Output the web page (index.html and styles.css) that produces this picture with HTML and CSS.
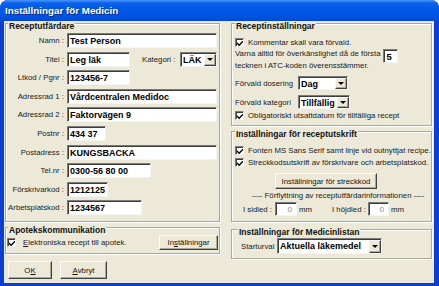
FILE: index.html
```html
<!DOCTYPE html>
<html>
<head>
<meta charset="utf-8">
<link rel="stylesheet" href="styles.css">
</head>
<body>
<div class="window">
  <div class="titlebar">Inställningar för Medicin</div>
  <div class="client">
    <div class="col">
      <div class="group g-utf">
        <div class="gtitle">Receptutfärdare</div>
        <div class="form">
          <span class="lbl">Namn :</span><div class="tb w150">Test Person</div>
          <span class="lbl">Titel :</span>
          <div class="rowf">
            <div class="tb w63">Leg läk</div>
            <span class="kat">Kategori :</span>
            <div class="sel w37"><span>LÄK</span><i class="arr"><b></b></i></div>
          </div>
          <span class="lbl">Ltkod / Pgnr :</span><div class="tb w63">123456-7</div>
          <span class="lbl">Adressrad 1 :</span><div class="tb w150">Vårdcentralen Medidoc</div>
          <span class="lbl">Adressrad 2 :</span><div class="tb w150">Faktorvägen 9</div>
          <span class="lbl">Postnr :</span><div class="tb w39">434 37</div>
          <span class="lbl">Postadress :</span><div class="tb w150">KUNGSBACKA</div>
          <span class="lbl">Tel.nr :</span><div class="tb w84">0300-56 80 00</div>
          <span class="lbl">Förskrivarkod :</span><div class="tb w41">1212125</div>
          <span class="lbl">Arbetsplatskod :</span><div class="tb w75">1234567</div>
        </div>
      </div>
      <div class="group g-apo">
        <div class="gtitle">Apotekskommunikation</div>
        <div class="apo-row">
          <span class="cb"><svg width="7" height="7" viewBox="0 0 7 7"><path d="M0 3 L2.5 5.5 L7 1" fill="none" stroke="#000" stroke-width="1.6"/></svg></span>
          <span class="cbtext"><u>E</u>lektroniska recept till apotek.</span>
          <span class="btn b-inst">In<u>s</u>tällningar</span>
        </div>
      </div>
      <div class="buttons">
        <span class="btn b-ok">O<u>K</u></span>
        <span class="btn b-av"><u>A</u>vbryt</span>
      </div>
    </div>

    <div class="col">
      <div class="group g-a">
        <div class="gtitle">Receptinställningar</div>
        <div class="cbrow r-komm">
          <span class="cb"><svg width="7" height="7" viewBox="0 0 7 7"><path d="M0 3 L2.5 5.5 L7 1" fill="none" stroke="#000" stroke-width="1.6"/></svg></span>
          <span>Kommentar skall vara förvald.</span>
        </div>
        <div class="varna">
          <span class="vtext">Varna alltid för överkänslighet då de första<br>tecknen i ATC-koden överensstämmer.</span>
          <div class="tb w15">5</div>
        </div>
        <div class="selgrid">
          <span>Förvald dosering</span>
          <div class="sel w50"><span>Dag</span><i class="arr"><b></b></i></div>
          <span>Förvald kategori</span>
          <div class="sel w52"><span>Tillfällig</span><i class="arr"><b></b></i></div>
        </div>
        <div class="cbrow r-obl">
          <span class="cb"><svg width="7" height="7" viewBox="0 0 7 7"><path d="M0 3 L2.5 5.5 L7 1" fill="none" stroke="#000" stroke-width="1.6"/></svg></span>
          <span>Obligatoriskt utsattdatum för tillfälliga recept</span>
        </div>
      </div>

      <div class="group g-b">
        <div class="gtitle">Inställningar för receptutskrift</div>
        <div class="cbrow r-font">
          <span class="cb"><svg width="7" height="7" viewBox="0 0 7 7"><path d="M0 3 L2.5 5.5 L7 1" fill="none" stroke="#000" stroke-width="1.6"/></svg></span>
          <span>Fonten MS Sans Serif samt linje vid outnyttjat recipe.</span>
        </div>
        <div class="cbrow r-streck">
          <span class="cb"><svg width="7" height="7" viewBox="0 0 7 7"><path d="M0 3 L2.5 5.5 L7 1" fill="none" stroke="#000" stroke-width="1.6"/></svg></span>
          <span>Streckkodsutskrift av förskrivare och arbetsplatskod.</span>
        </div>
        <span class="btn b-streck">Inställningar för streckkod</span>
        <div class="forfl">---- Förflyttning av receptutfärdarinformationen ----</div>
        <div class="mmrow">
          <span class="l-sid">I sidled :</span>
          <div class="tb num w22">0</div>
          <span class="mm">mm</span>
          <span class="l-hojd">I höjdled :</span>
          <div class="tb num w21">0</div>
          <span class="mm">mm</span>
        </div>
      </div>

      <div class="group g-c">
        <div class="gtitle">Inställningar för Medicinlistan</div>
        <div class="startrow">
          <span>Starturval</span>
          <div class="sel w105 h16"><span>Aktuella läkemedel</span><i class="arr"><b></b></i></div>
        </div>
      </div>
    </div>
  </div>
</div>
</body>
</html>
```

FILE: styles.css
```css
* { box-sizing: border-box; }

body {
  margin: 0;
  width: 439px;
  height: 286px;
  overflow: hidden;
  background: #ffffff;
  font-family: "Liberation Sans", Arial, sans-serif;
  font-size: 7.8px;
  color: #1a1a1a;
}

.window {
  width: 439px;
  height: 286px;
  background: #0a3fd2;
  border-radius: 8px 8px 0 0;
  display: flex;
  flex-direction: column;
  overflow: hidden;
}

.titlebar {
  height: 21px;
  flex: none;
  background: linear-gradient(#4a96ff 0, #0c62ea 3px, #0058e6 9px, #0054e3 16px, #0048d4 21px);
  color: #fff;
  font-weight: bold;
  font-size: 9.8px;
  padding-left: 5px;
  display: flex;
  align-items: center;
  text-shadow: 1px 1px 0 #0b2680;
}

.client {
  flex: 1;
  margin: 0 5px 3px 4px;
  background: #ece9d8;
  display: grid;
  grid-template-columns: 215px 201px;
  column-gap: 11px;
  padding: 2px 2px 0 1px;
}

.col {
  display: flex;
  flex-direction: column;
}

.group {
  border: 1px solid #aca899;
  box-shadow: inset 1px 1px 0 #fff, 1px 1px 0 #fff;
}

.gtitle {
  font-weight: bold;
  font-size: 8.5px;
  line-height: 9px;
  margin: -2px 0 0 2px;
  padding: 0 1px;
  background: #ece9d8;
  width: max-content;
  color: #111;
}

/* left column */
.g-utf { height: 199px; }

.form {
  display: grid;
  grid-template-columns: 58px 150px;
  column-gap: 3px;
  row-gap: 3.6px;
  margin-top: 2px;
  align-items: center;
}

.lbl { text-align: right; white-space: nowrap; }

.tb {
  height: 15px;
  background: #fff;
  border: 1px solid;
  border-color: #7b7b7b #f4f4f4 #f4f4f4 #7b7b7b;
  box-shadow: inset 1px 1px 0 #3c3c3c;
  font-weight: bold;
  font-size: 9px;
  line-height: 14px;
  padding-left: 2px;
  white-space: nowrap;
  overflow: hidden;
  color: #000;
  justify-self: start;
}

.w150 { width: 150px; }
.w84 { width: 84px; }
.w75 { width: 75px; }
.w63 { width: 63px; }
.w41 { width: 41px; }
.w39 { width: 39px; }
.w37 { width: 37px; }
.w50 { width: 50px; }
.w52 { width: 52px; }
.w105 { width: 105px; }
.w22 { width: 22px; }
.w21 { width: 21px; }
.w15 { width: 15px; }

.rowf {
  display: flex;
  align-items: center;
}

.kat { margin-left: 12px; }
.rowf .sel { margin-left: auto; }

.sel {
  height: 15px;
  background: #fff;
  border: 1px solid;
  border-color: #7b7b7b #f4f4f4 #f4f4f4 #7b7b7b;
  box-shadow: inset 1px 1px 0 #3c3c3c;
  display: flex;
  font-weight: bold;
  font-size: 9px;
  line-height: 13px;
  color: #000;
  padding: 1px 0 0 1px;
}
.sel > span {
  flex: 1;
  padding-left: 1px;
  white-space: nowrap;
  overflow: hidden;
}
.sel .arr {
  width: 12px;
  flex: none;
  background: #ece9d8;
  border: 1px solid;
  border-color: #f8f8f8 #404040 #404040 #f8f8f8;
  box-shadow: inset -1px -1px 0 #aca899;
  display: flex;
  align-items: center;
  justify-content: center;
}
.sel .arr b {
  width: 0;
  height: 0;
  border-left: 3px solid transparent;
  border-right: 3px solid transparent;
  border-top: 3px solid #000;
}
.h16 { height: 16px; }

.g-apo {
  margin-top: 5px;
  height: 27px;
}

.apo-row {
  display: flex;
  align-items: center;
  padding-left: 1px;
  margin-top: 0;
}

.cb {
  width: 9px;
  height: 9px;
  flex: none;
  background: #fff;
  border: 1px solid;
  border-color: #7b7b7b #f4f4f4 #f4f4f4 #7b7b7b;
  box-shadow: inset 1px 1px 0 #3c3c3c;
  display: flex;
  align-items: center;
  justify-content: center;
  padding: 1px 0 0 1px;
}

.cbtext { margin-left: 7px; }

.btn {
  display: flex;
  align-items: center;
  justify-content: center;
  background: #ece9d8;
  border: 1px solid;
  border-color: #fcfcfc #404040 #404040 #fcfcfc;
  box-shadow: inset -1px -1px 0 #aca899;
  white-space: nowrap;
  color: #111;
}

.b-inst {
  margin-left: auto;
  margin-right: 1px;
  width: 59px;
  height: 15px;
}

.buttons {
  margin-top: 7px;
  display: flex;
  gap: 8px;
  padding-left: 3px;
}
.b-ok { width: 44px; height: 18px; }
.b-av { width: 47px; height: 18px; }

/* right column */
.g-a {
  height: 103px;
  padding-left: 3px;
}
.g-a .gtitle { margin-left: 0; }

.cbrow {
  display: flex;
  align-items: center;
  height: 11px;
  white-space: nowrap;
}
.cbrow .cb { margin-right: 4px; }

.r-komm { margin-top: 6px; }

.varna {
  display: flex;
  align-items: flex-start;
  margin-top: 0;
}
.vtext {
  line-height: 12px;
  white-space: nowrap;
}
.varna .tb { margin: 1px 0 0 3px; height: 14px; font-size: 9.5px; }

.selgrid {
  display: grid;
  grid-template-columns: 63px auto;
  row-gap: 5px;
  align-items: center;
  margin-top: 4px;
  justify-items: start;
}
.selgrid .sel { height: 14px; }

.r-obl { margin-top: 1px; }

.g-b {
  margin-top: 5px;
  height: 91px;
  padding-left: 3px;
}
.g-b .gtitle { margin-left: 0; }
.r-font { margin-top: 6px; }
.r-streck { margin-top: 1px; }

.b-streck {
  margin: 5px 0 0 40px;
  width: 102px;
  height: 16px;
}

.forfl {
  margin-top: 2px;
  padding-left: 17px;
  line-height: 10px;
  white-space: nowrap;
}

.mmrow {
  display: flex;
  align-items: center;
  margin-top: 1px;
  white-space: nowrap;
}
.l-sid { margin-left: 8px; width: 32px; }
.mm { margin-left: 2px; }
.l-hojd { margin-left: 20px; width: 36px; }

.num {
  height: 14px;
  font-weight: normal;
  font-size: 8px;
  color: #8a8a8a;
  text-align: right;
  padding-right: 4px;
  justify-self: auto;
}

.g-c {
  margin-top: 7px;
  height: 30px;
  padding-left: 3px;
}
.g-c .gtitle { margin-left: 3px; }

.startrow {
  display: flex;
  align-items: center;
  margin-top: 1px;
  padding-left: 6px;
}
.startrow > span { width: 36px; }
```
